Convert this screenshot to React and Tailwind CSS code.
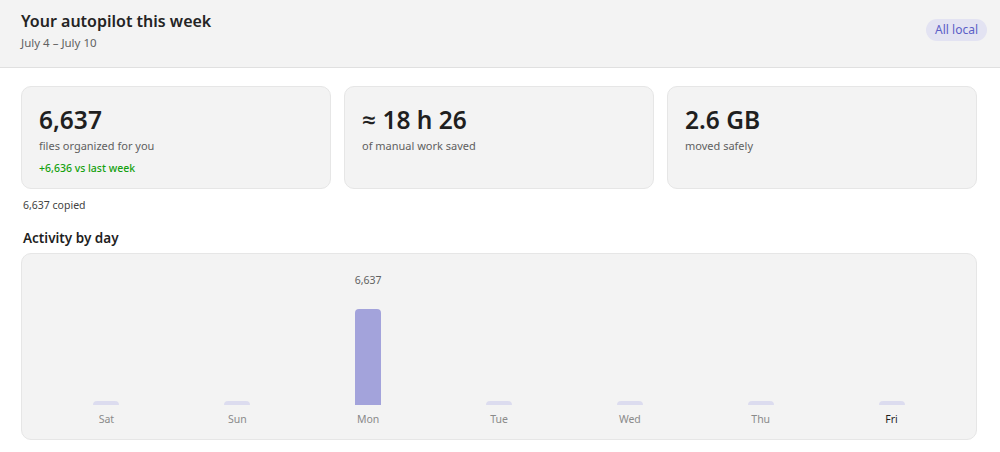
const stats = [
  { value: "6,637", label: "files organized for you", delta: "+6,636 vs last week" },
  { value: "≈ 18 h 26", label: "of manual work saved" },
  { value: "2.6 GB", label: "moved safely" },
];

const days = [
  { day: "Sat", count: 0 },
  { day: "Sun", count: 0 },
  { day: "Mon", count: 6637 },
  { day: "Tue", count: 0 },
  { day: "Wed", count: 0 },
  { day: "Thu", count: 0 },
  { day: "Fri", count: 0, today: true },
];

function StatCard({ stat }) {
  return (
    <div className="h-[103px] rounded-[10px] border border-[#e6e6e6] bg-[#f3f3f3] px-[17px] pt-[17px]">
      <div className="text-[24.5px] font-semibold leading-[32px] text-[#1f1f1f]">{stat.value}</div>
      <div className="mt-[2px] text-[11px] leading-[16px] text-[#5f5f5f]">{stat.label}</div>
      {stat.delta && (
        <div className="mt-[6px] text-[10.5px] font-medium leading-[16px] text-[#13a10e]">{stat.delta}</div>
      )}
    </div>
  );
}

function DayColumn({ d, max }) {
  const h = d.count ? Math.round((d.count / max) * 96) : 4;
  return (
    <div className="flex flex-col items-center">
      <div className="h-[14px] text-[10.5px] leading-[14px] text-[#616161]">
        {d.count ? d.count.toLocaleString("en-US") : ""}
      </div>
      <div className="flex h-[118px] items-end">
        <div
          className={d.count ? "w-[26px] rounded-t-[4px] bg-[#a3a3db]" : "w-[26px] rounded-t-full bg-[#dcdcef]"}
          style={{ height: h }}
        />
      </div>
      <div className={"mt-[7px] text-[10.5px] leading-[14px] " + (d.today ? "text-[#1f1f1f]" : "text-[#8a8a8a]")}>
        {d.day}
      </div>
    </div>
  );
}

export default function App() {
  const max = Math.max(...days.map((d) => d.count));
  return (
    <div className="min-h-[452px] bg-white font-['Noto_Sans','Open_Sans',sans-serif]">
      <header className="flex h-[68px] items-start justify-between border-b border-[#e0e0e0] bg-[#f3f3f3] px-[21px] pt-[9px]">
        <div>
          <h1 className="text-[16px] font-semibold leading-[24px] text-[#242424]">Your autopilot this week</h1>
          <p className="mt-[1px] text-[11.5px] leading-[18px] text-[#616161]">July 4 – July 10</p>
        </div>
        <span className="mt-[10px] mr-[-8px] rounded-full bg-[#e3e3f2] px-[9px] py-[3px] text-[12px] leading-[16px] text-[#5b5fc7]">
          All local
        </span>
      </header>

      <main className="pl-[21px] pr-[23px] pt-[18px]">
        <div className="grid grid-cols-3 gap-[13px]">
          {stats.map((s) => (
            <StatCard key={s.value} stat={s} />
          ))}
        </div>
        <p className="mt-[9px] pl-[2px] text-[10.5px] leading-[14px] text-[#424242]">6,637 copied</p>

        <h2 className="mt-[17px] pl-[2px] text-[13.5px] font-semibold leading-[18px] text-[#1f1f1f]">Activity by day</h2>
        <div className="mt-[6px] rounded-[10px] border border-[#e6e6e6] bg-[#f3f3f3] px-[19px] pt-[19px] pb-[13px]">
          <div className="grid grid-cols-7">
            {days.map((d) => (
              <DayColumn key={d.day} d={d} max={max} />
            ))}
          </div>
        </div>
      </main>
    </div>
  );
}
